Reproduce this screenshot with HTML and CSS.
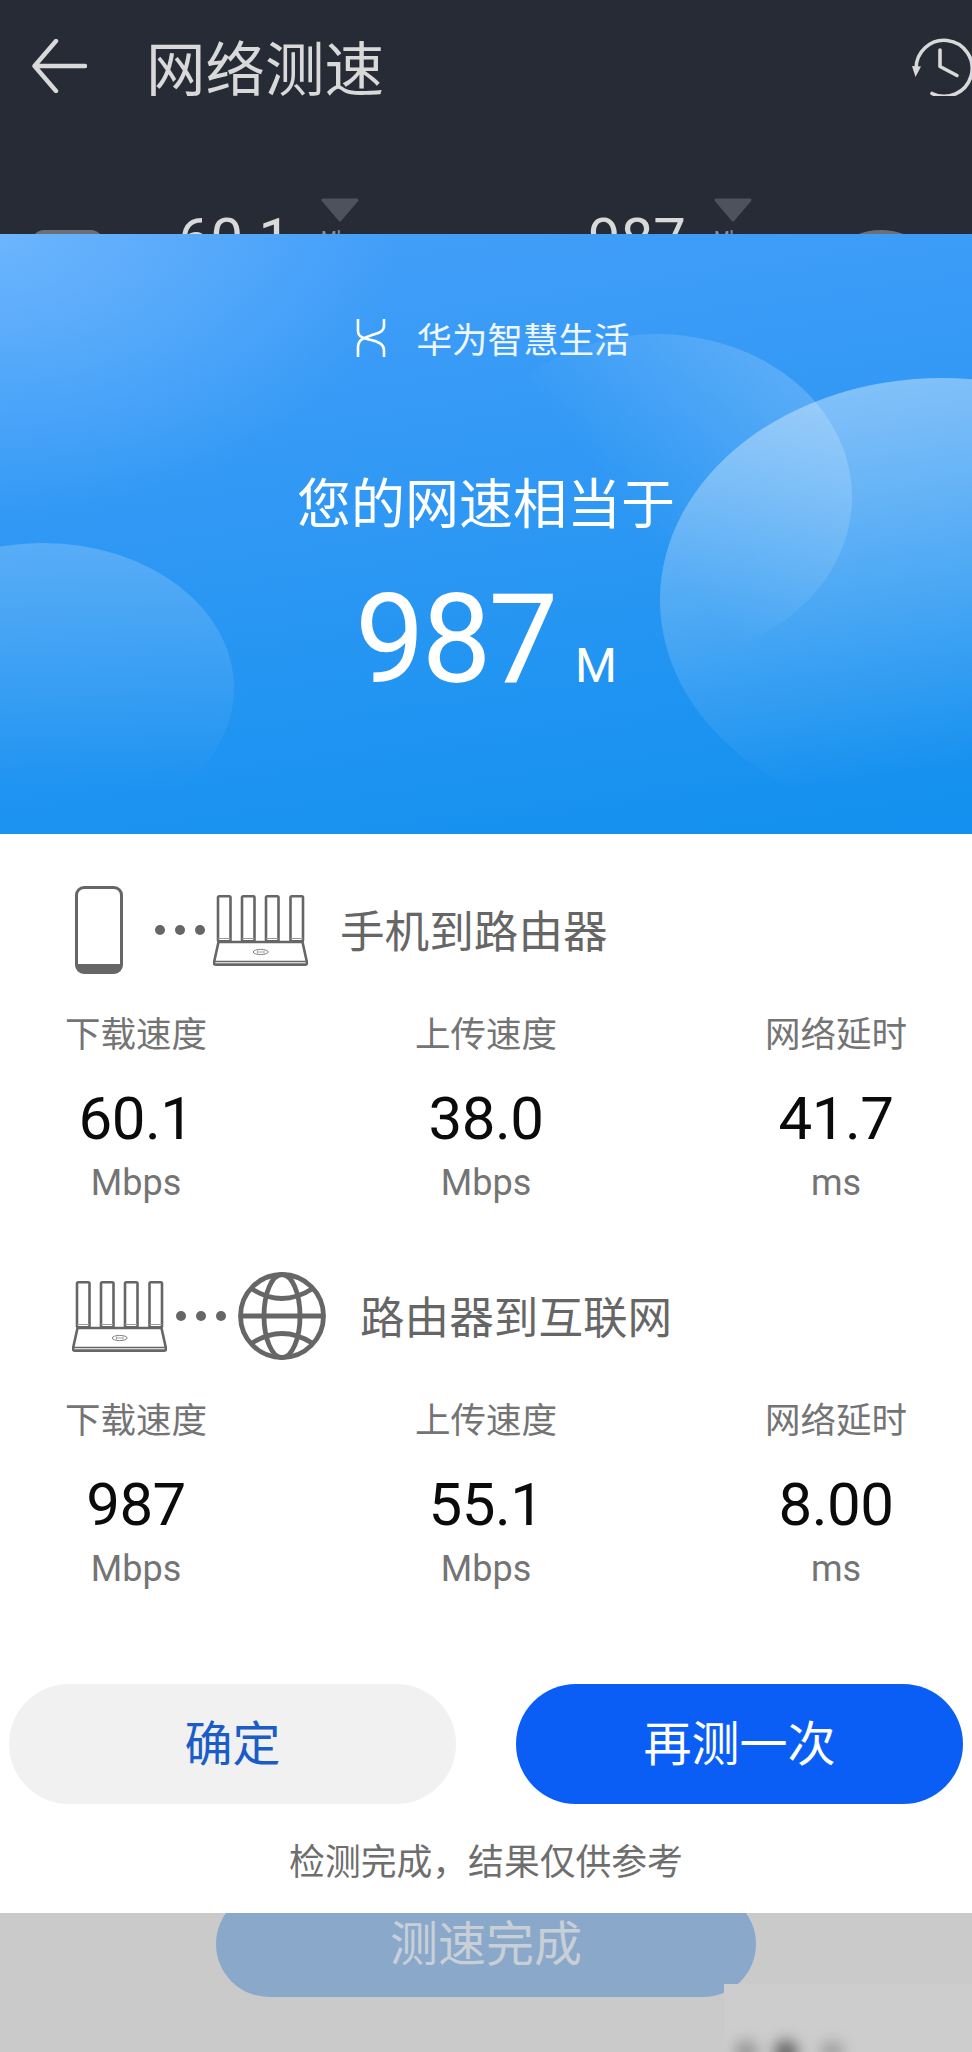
FILE: index.html
```html
<!DOCTYPE html>
<html lang="zh-CN">
<head>
<meta charset="utf-8">
<title>网络测速</title>
<link rel="stylesheet" href="styles.css">
</head>
<body>
<svg class="defs" width="0" height="0" aria-hidden="true">
  <symbol id="router" viewBox="0 0 95 71">
    <g fill="none" stroke="#666" stroke-width="2.6" stroke-linejoin="round">
      <rect x="5" y="1.3" width="12.5" height="45" rx="1.2"/>
      <rect x="29" y="1.3" width="12.5" height="45" rx="1.2"/>
      <rect x="53" y="1.3" width="12.5" height="45" rx="1.2"/>
      <rect x="77.5" y="1.3" width="12.5" height="45" rx="1.2"/>
      <path d="M5 43.5H17.5M29 43.5H41.5M53 43.5H65.5M77.5 43.5H90" stroke-width="1" stroke="#999"/>
      <path d="M5.5 47H89.5L94 67.5Q94.3 69.6 92 69.6H3Q.7 69.6 1 67.5Z"/>
      <path d="M2 66.5H93" stroke-width="1.6"/>
      <ellipse cx="47.7" cy="57" rx="7.5" ry="2.6" stroke-width=".8"/>
      <path d="M44.5 55.5V58.5M51 55.5V58.5M45 57H50.5" stroke-width=".6"/>
    </g>
  </symbol>
</svg>

<div class="page">
  <header class="topbar">
    <div class="nav">
      <svg class="back" viewBox="0 0 55 54" aria-hidden="true">
        <path d="M24 2L2.5 27L24 52M3 27H53" fill="none" stroke="#d9d9d9" stroke-width="4.4" stroke-linecap="round" stroke-linejoin="round"/>
      </svg>
      <h1 class="nav-title">网络测速</h1>
      <svg class="clock" viewBox="0 0 60 60" aria-hidden="true">
        <path d="M20 57.5A28 28 0 1 0 4.2 34" fill="none" stroke="#d9d9d9" stroke-width="3.6" stroke-linecap="round"/>
        <path d="M0 30L9 30.5L3.5 41Z" fill="#d9d9d9"/>
        <path d="M28 14V30.5L45 39.5" fill="none" stroke="#d9d9d9" stroke-width="3.6" stroke-linecap="round" stroke-linejoin="round"/>
      </svg>
    </div>
    <div class="stats">
      <span class="dim-icon dim-phone"></span>
      <span class="dim-num num-first">60.1</span>
      <span class="dim-unit">
        <svg class="tri" viewBox="0 0 38 24" aria-hidden="true"><path d="M2 2H36L19 22Z" fill="#4f525c" stroke="#4f525c" stroke-width="3" stroke-linejoin="round"/></svg>
        <small>Mbps</small>
      </span>
      <span class="dim-num num-second">987</span>
      <span class="dim-unit dim-unit-second">
        <svg class="tri" viewBox="0 0 38 24" aria-hidden="true"><path d="M2 2H36L19 22Z" fill="#4f525c" stroke="#4f525c" stroke-width="3" stroke-linejoin="round"/></svg>
        <small>Mbps</small>
      </span>
      <span class="dim-icon dim-globe"></span>
    </div>
  </header>

  <section class="hero">
    <svg class="hero-art" viewBox="0 0 972 600" aria-hidden="true">
      <defs>
        <linearGradient id="fadeBack" x1="0.2" y1="0.7" x2="0.95" y2="0.2">
          <stop offset="0.3" stop-color="#fff" stop-opacity="0"/>
          <stop offset="1" stop-color="#fff" stop-opacity=".2"/>
        </linearGradient>
        <linearGradient id="fadeRight" x1="0.3" y1="0" x2="0.5" y2="1">
          <stop offset="0" stop-color="#fff" stop-opacity=".4"/>
          <stop offset="0.88" stop-color="#fff" stop-opacity="0"/>
        </linearGradient>
        <linearGradient id="fadeLeft" x1="0" y1="0" x2="0" y2="1">
          <stop offset="0" stop-color="#fff" stop-opacity=".2"/>
          <stop offset="0.85" stop-color="#fff" stop-opacity="0"/>
        </linearGradient>
      </defs>
      <ellipse cx="657" cy="263" rx="195" ry="163" fill="url(#fadeBack)"/>
      <ellipse cx="942" cy="366" rx="282" ry="222" fill="url(#fadeRight)"/>
      <ellipse cx="43" cy="454" rx="191" ry="145" fill="url(#fadeLeft)"/>
    </svg>
    <div class="brand">
      <svg class="brand-mark" viewBox="0 0 30 38" aria-hidden="true">
        <path d="M2 0V12C2 18 8 19.5 15 21C22 22.5 28 25 28 31V38M28 0V7C28 13 21 14.5 15 16.5C8 18.5 2 21 2 28V38" fill="none" stroke="#fff" stroke-width="2.6"/>
      </svg>
      <span class="brand-name">华为智慧生活</span>
    </div>
    <p class="hero-line">您的网速相当于</p>
    <p class="hero-speed"><span class="hero-num">987</span><span class="hero-unit">M</span></p>
  </section>

  <main class="sheet">
    <div class="route route-first">
      <svg class="phone" viewBox="0 0 48 88" aria-hidden="true">
        <path d="M9 1.5H39A7.5 7.5 0 0 1 46.5 9V79A7.5 7.5 0 0 1 39 86.5H9A7.5 7.5 0 0 1 1.5 79V9A7.5 7.5 0 0 1 9 1.5Z" fill="none" stroke="#666" stroke-width="3"/>
        <path d="M2 78H46V80A7 7 0 0 1 39 87H9A7 7 0 0 1 2 80Z" fill="#666"/>
      </svg>
      <span class="dots"><i></i><i></i><i></i></span>
      <svg class="router"><use href="#router"/></svg>
      <span class="route-name">手机到路由器</span>
    </div>
    <div class="metrics">
      <div class="metric"><span class="metric-label">下载速度</span><span class="metric-value">60.1</span><span class="metric-unit">Mbps</span></div>
      <div class="metric"><span class="metric-label">上传速度</span><span class="metric-value">38.0</span><span class="metric-unit">Mbps</span></div>
      <div class="metric"><span class="metric-label">网络延时</span><span class="metric-value">41.7</span><span class="metric-unit">ms</span></div>
    </div>

    <div class="route route-second">
      <svg class="router"><use href="#router"/></svg>
      <span class="dots"><i></i><i></i><i></i></span>
      <svg class="globe" viewBox="0 0 88 88" aria-hidden="true">
        <g fill="none" stroke="#666" stroke-width="4.8">
          <circle cx="44" cy="44" r="41.5"/>
          <ellipse cx="44" cy="44" rx="18" ry="41.5"/>
          <path d="M2.5 44H85.5" stroke-width="5"/>
          <path d="M14 17Q44 36 74 17M14 71Q44 52 74 71"/>
        </g>
      </svg>
      <span class="route-name">路由器到互联网</span>
    </div>
    <div class="metrics">
      <div class="metric"><span class="metric-label">下载速度</span><span class="metric-value">987</span><span class="metric-unit">Mbps</span></div>
      <div class="metric"><span class="metric-label">上传速度</span><span class="metric-value">55.1</span><span class="metric-unit">Mbps</span></div>
      <div class="metric"><span class="metric-label">网络延时</span><span class="metric-value">8.00</span><span class="metric-unit">ms</span></div>
    </div>

    <div class="actions">
      <button class="btn btn-light" type="button">确定</button>
      <button class="btn btn-primary" type="button">再测一次</button>
    </div>
    <p class="note">检测完成，结果仅供参考</p>
  </main>

  <footer class="under">
    <div class="ghost-btn">测速完成</div>
    <div class="patch"><i></i><i></i><i></i></div>
  </footer>
</div>
</body>
</html>
```

FILE: styles.css
```css
* { box-sizing: border-box; }

html, body {
  margin: 0;
  padding: 0;
  background: #cacaca;
}

body {
  font-family: Roboto, "Noto Sans CJK SC", sans-serif;
}

.defs { position: absolute; }

.page {
  width: 972px;
  height: 2052px;
  display: flex;
  flex-direction: column;
  overflow: hidden;
}

/* dark app bar, mostly covered by the dialog */
.topbar {
  flex: 0 0 234px;
  background: #272b35;
  overflow: hidden;
}

.nav {
  display: flex;
  align-items: center;
  height: 132px;
  padding-left: 32px;
}

.back { width: 55px; height: 54px; }

.nav-title {
  margin: 10px 0 0 59px;
  font-size: 59.5px;
  font-weight: 400;
  line-height: 70px;
  color: #d9d9d9;
}

.clock {
  width: 60px;
  height: 60px;
  margin-left: auto;
}

.stats {
  display: flex;
  align-items: flex-start;
  padding: 66px 0 0 32px;
}

.dim-icon {
  display: block;
  margin-top: 32px;
  background: #6b6f78;
}

.dim-phone { width: 71px; height: 60px; border-radius: 12px; }
.dim-globe { width: 132px; height: 132px; margin-left: 63px; border-radius: 50%; }

.dim-num {
  margin-top: 13px;
  font-size: 58px;
  line-height: 56px;
  color: #d9d9d9;
}

.num-first { margin-left: 75px; }
.num-second { margin-left: 229px; }

.dim-unit {
  display: flex;
  flex-direction: column;
  margin-left: 30px;
  width: 38px;
}

.dim-unit-second { margin-left: 28px; }

.tri { width: 38px; height: 24px; display: block; }

.dim-unit small {
  margin-top: 6px;
  font-size: 18px;
  line-height: 20px;
  color: #8d9097;
}

/* blue hero */
.hero {
  position: relative;
  flex: 0 0 600px;
  display: flex;
  flex-direction: column;
  align-items: center;
  overflow: hidden;
  background:
    radial-gradient(ellipse 400px 280px at 0 0, rgba(135, 195, 255, .6), rgba(135, 195, 255, 0)),
    linear-gradient(172deg, #459ffa 0%, #2f98f4 45%, #1290ef 100%);
  color: #fff;
}

.hero-art {
  position: absolute;
  inset: 0;
  width: 100%;
  height: 100%;
}

.brand,
.hero-line,
.hero-speed { position: relative; }

.brand {
  display: flex;
  align-items: center;
  gap: 30px;
  margin: 85px 0 0 14px;
  height: 38px;
}

.brand-mark { width: 30px; height: 38px; }

.brand-name {
  padding-top: 6px;
  font-size: 35.5px;
  line-height: 38px;
  color: #eef7ff;
}

.hero-line {
  margin: 116px 0 0;
  font-size: 54px;
  line-height: 66px;
}

.hero-speed {
  display: flex;
  align-items: baseline;
  margin: 39px 0 0;
  line-height: 124px;
}

.hero-num {
  font-size: 124px;
  font-weight: 400;
  letter-spacing: -3px;
}

.hero-unit {
  margin-left: 20px;
  font-size: 48px;
  font-weight: 400;
}

/* result sheet */
.sheet {
  flex: 0 0 1079px;
  display: flex;
  flex-direction: column;
  background: #fff;
}

.route {
  display: flex;
  align-items: center;
  height: 88px;
}

.route-first { margin-top: 52px; padding-left: 75px; }
.route-second { margin-top: 69px; padding-left: 72px; }

.phone { width: 48px; height: 88px; }
.router { width: 95px; height: 71px; }
.globe { width: 88px; height: 88px; margin-left: 12px; }

.dots {
  display: flex;
  gap: 10px;
}

.dots i {
  display: block;
  width: 10px;
  height: 10px;
  border-radius: 50%;
  background: #666;
}

.route-first .dots { margin: 0 8px 0 32px; }
.route-second .dots { margin-left: 9px; }

.route-name {
  padding-top: 6px;
  font-size: 44.6px;
  line-height: 60px;
  color: #666;
}

.route-first .route-name { margin-left: 32px; }
.route-second .route-name { margin-left: 34px; }

.metrics {
  display: grid;
  grid-template-columns: repeat(3, 270px);
  column-gap: 80px;
  margin-top: 41px;
  padding-left: 1px;
}

.metric {
  display: flex;
  flex-direction: column;
  align-items: center;
}

.metric-label {
  font-size: 35.5px;
  line-height: 40px;
  color: #747474;
}

.metric-value {
  margin-top: 34px;
  font-size: 60px;
  line-height: 60px;
  letter-spacing: -.5px;
  color: #0b0b0b;
}

.metric-unit {
  margin-top: 14px;
  font-size: 36px;
  line-height: 40px;
  color: #747474;
}

.actions {
  display: flex;
  justify-content: space-between;
  margin-top: 95px;
  padding: 0 9px;
}

.btn {
  width: 447px;
  height: 120px;
  padding: 0 0 8px;
  border: 0;
  border-radius: 60px;
  font-family: inherit;
  font-size: 48px;
}

.btn-light {
  background: #f1f1f1;
  color: #1a5cc8;
}

.btn-primary {
  background: #0a5ef5;
  color: #fff;
}

.note {
  margin: 39px 0 0;
  font-size: 35.8px;
  line-height: 40px;
  text-align: center;
  color: #6e6e6e;
}

/* page showing under the dialog */
.under {
  position: relative;
  flex: 1;
  background: #cacaca;
  overflow: hidden;
}

.ghost-btn {
  width: 540px;
  height: 106px;
  margin: -22px 0 0 216px;
  border-radius: 53px;
  background: #8aa9ca;
  color: #c9cfd6;
  font-size: 48px;
  line-height: 108px;
  text-align: center;
}

.patch {
  position: absolute;
  left: 724px;
  top: 71px;
  width: 248px;
  height: 68px;
  overflow: hidden;
  background: #cdcdcd;
}

.patch i {
  position: absolute;
  top: 56px;
  width: 24px;
  height: 24px;
  border-radius: 50%;
  background: #666;
  filter: blur(7px);
}

.patch i:nth-child(1) { left: 10px; opacity: .5; }
.patch i:nth-child(2) { left: 50px; }
.patch i:nth-child(3) { left: 96px; opacity: .4; }
```
